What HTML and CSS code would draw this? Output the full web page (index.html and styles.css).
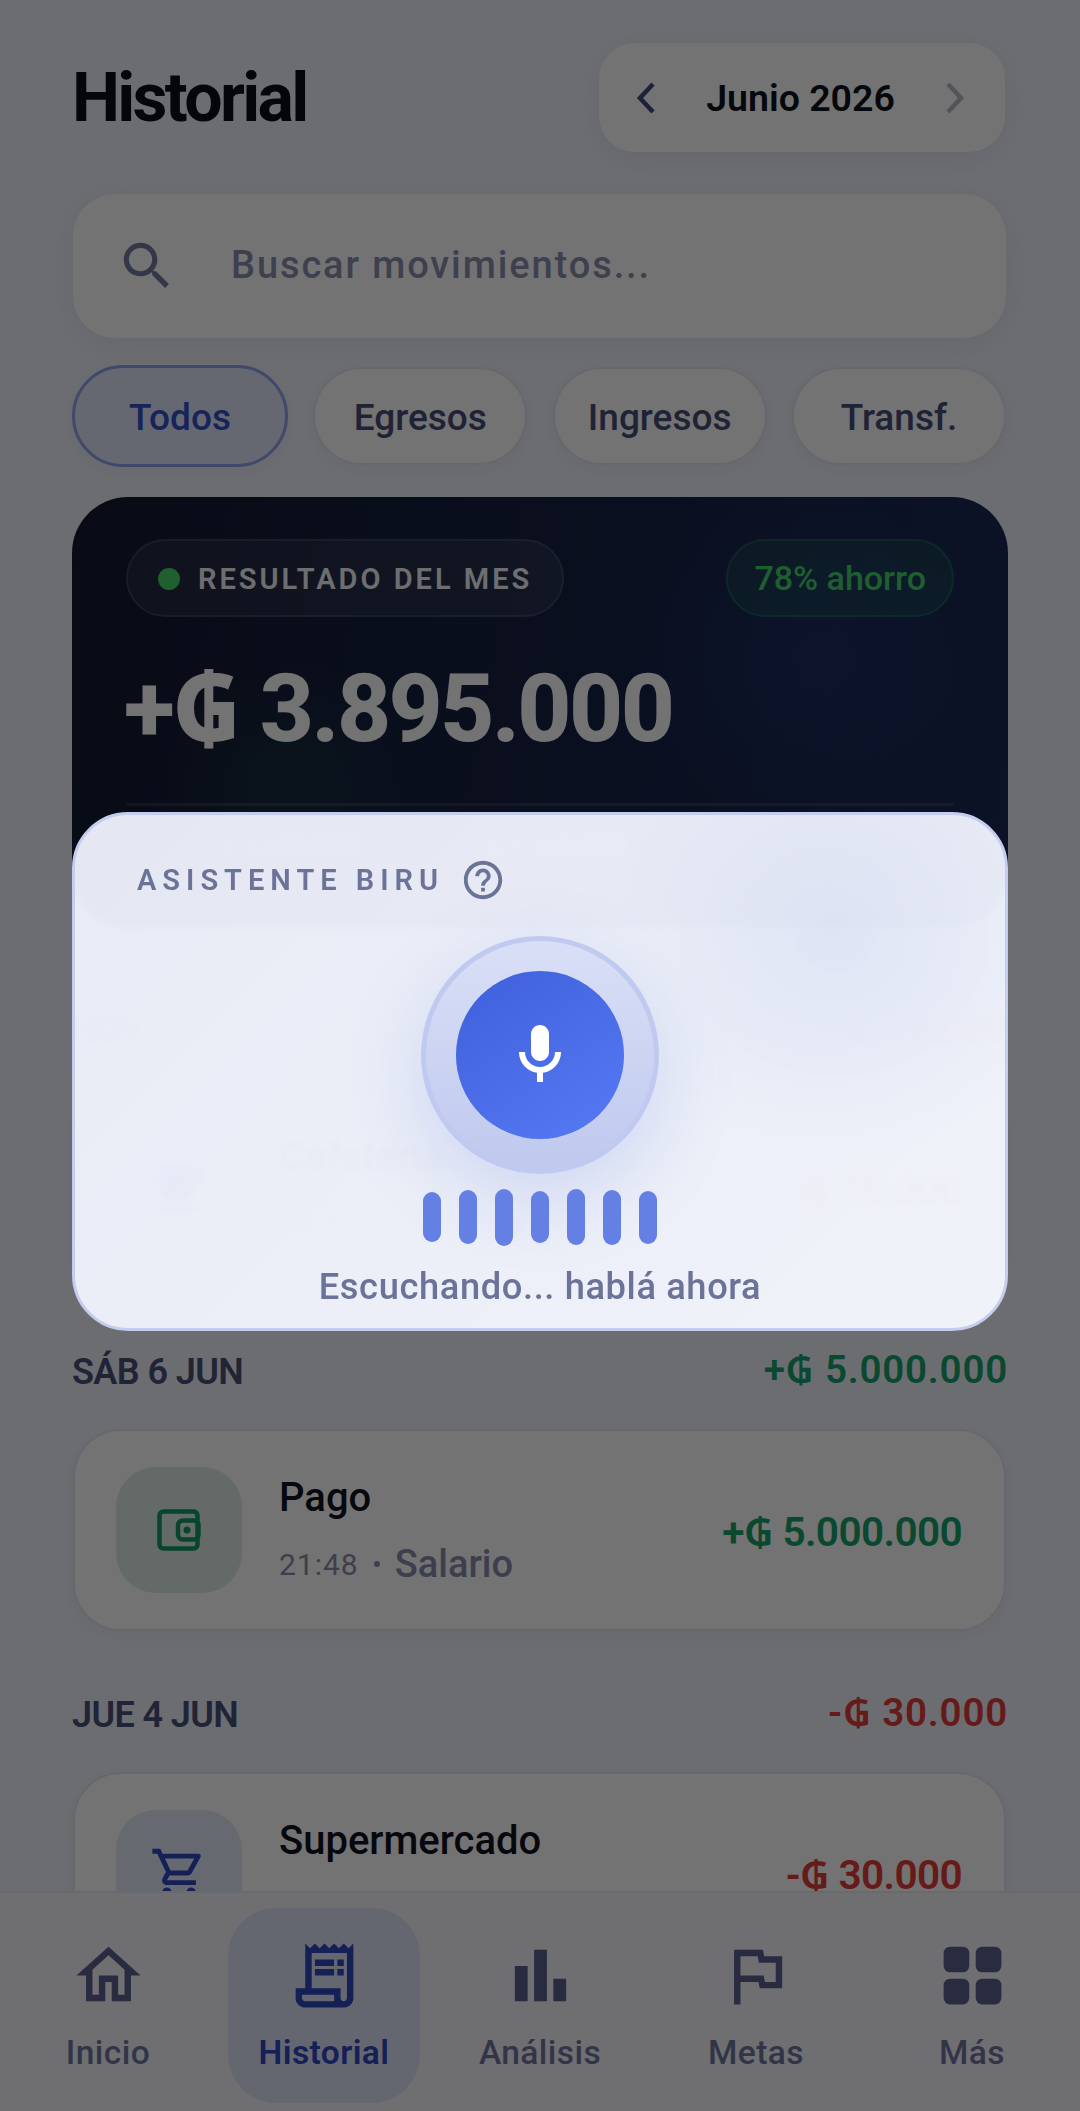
FILE: index.html

```html
<!DOCTYPE html>
<html lang="es">
<head>
    <meta charset="UTF-8">
    <meta name="viewport" content="width=device-width, initial-scale=1">
    <title>Historial</title>
    <link rel="stylesheet" href="styles.css">
</head>
<body>
    <div class="screen">
        <main class="content">
            <header class="top">
                <h1 class="page-title">Historial</h1>
                <div class="month-pill">
                    <svg class="chev" viewBox="0 0 36 36"><path d="M26 4 13 18l13 14"/></svg>
                    <span class="month-name">Junio 2026</span>
                    <svg class="chev chev-off" viewBox="0 0 36 36"><path d="M10 4l13 14-13 14"/></svg>
                </div>
            </header>

            <div class="search">
                <svg class="search-icon" viewBox="0 0 24 24"><path d="M15.5 14h-.79l-.28-.27A6.47 6.47 0 0 0 16 9.5 6.5 6.5 0 1 0 9.5 16c1.61 0 3.09-.59 4.23-1.57l.27.28v.79l5 4.99L20.49 19l-4.99-5zm-6 0C7.01 14 5 11.99 5 9.5S7.01 5 9.5 5 14 7.01 14 9.5 11.99 14 9.5 14z"/></svg>
                <span class="search-text">Buscar movimientos...</span>
            </div>

            <div class="chips">
                <span class="chip chip-on">Todos</span>
                <span class="chip">Egresos</span>
                <span class="chip">Ingresos</span>
                <span class="chip">Transf.</span>
            </div>

            <section class="result">
                <div class="result-top">
                    <span class="result-label"><i class="dot"></i>RESULTADO DEL MES</span>
                    <span class="result-save">78% ahorro</span>
                </div>
                <div class="result-amount">+₲ 3.895.000</div>
                <div class="result-line"></div>
                <div class="result-foot">
                    <span>₲ 5.000.000</span>
                    <span>₲ 1.105.000</span>
                </div>
            </section>

            <div class="day-head day-hoy">
                <span class="day-name">HOY</span>
                <span class="day-sum minus">-₲ 75.000</span>
            </div>
            <div class="row row-hoy">
                <div class="row-icon icon-blue">
                    <svg viewBox="0 0 24 24"><path d="M20 3H4v10c0 2.21 1.79 4 4 4h6c2.21 0 4-1.79 4-4v-3h2c1.11 0 2-.89 2-2V5c0-1.11-.89-2-2-2zm0 5h-2V5h2v3zM4 19h16v2H4z"/></svg>
                </div>
                <div class="row-info">
                    <div class="row-title">Cafetería</div>
                    <div class="row-sub"><span class="row-time">08:30</span><i class="sep"></i><span>Comida</span></div>
                </div>
                <div class="row-amount minus">-₲ 75.000</div>
            </div>

            <div class="day-head day-sab">
                <span class="day-name">SÁB 6 JUN</span>
                <span class="day-sum plus">+₲ 5.000.000</span>
            </div>
            <div class="row">
                <div class="row-icon icon-green">
                    <svg class="wallet" viewBox="0 0 44 42"><rect x="2.5" y="2.5" width="38" height="37" rx="4"/><rect x="21" y="11.5" width="20.5" height="19" rx="5"/><circle class="wallet-dot" cx="30" cy="21" r="3.5"/></svg>
                </div>
                <div class="row-info">
                    <div class="row-title">Pago</div>
                    <div class="row-sub"><span class="row-time">21:48</span><i class="sep"></i><span>Salario</span></div>
                </div>
                <div class="row-amount plus">+₲ 5.000.000</div>
            </div>

            <div class="day-head day-jue">
                <span class="day-name">JUE 4 JUN</span>
                <span class="day-sum minus">-₲ 30.000</span>
            </div>
            <div class="row">
                <div class="row-icon icon-blue">
                    <svg viewBox="0 0 24 24"><path d="M15.55 13c.75 0 1.41-.41 1.75-1.03l3.58-6.49A1 1 0 0 0 20.01 4H5.21l-.94-2H1v2h2l3.6 7.59-1.35 2.44C4.52 15.37 5.48 17 7 17h12v-2H7l1.1-2h7.45zM6.16 6h12.15l-2.76 5H8.53L6.16 6zM7 18a2 2 0 1 0 0 4 2 2 0 0 0 0-4zm10 0a2 2 0 1 0 0 4 2 2 0 0 0 0-4z"/></svg>
                </div>
                <div class="row-info">
                    <div class="row-title">Supermercado</div>
                    <div class="row-sub"><span class="row-time">18:20</span><i class="sep"></i><span>Comida</span></div>
                </div>
                <div class="row-amount minus">-₲ 30.000</div>
            </div>
        </main>

        <nav class="tabs">
            <a class="tab">
                <svg viewBox="0 0 24 24"><path d="M12 5.69l5 4.5V18h-2v-6H9v6H7v-7.81l5-4.5M12 3L2 12h3v8h6v-6h2v6h6v-8h3L12 3z"/></svg>
                <span>Inicio</span>
            </a>
            <a class="tab tab-on">
                <svg viewBox="0 0 24 24"><path d="M19.5 3.5 18 2l-1.5 1.5L15 2l-1.5 1.5L12 2l-1.5 1.5L9 2 7.5 3.5 6 2v14H3v3c0 1.66 1.34 3 3 3h12c1.66 0 3-1.34 3-3V2l-1.5 1.5zM15 20H6c-.55 0-1-.45-1-1v-1h10v2zm4-1c0 .55-.45 1-1 1s-1-.45-1-1v-3H8V5h11v14z"/><path d="M9 7h6v2H9zM16 7h2v2h-2zM9 10h6v2H9zM16 10h2v2h-2z"/></svg>
                <span>Historial</span>
            </a>
            <a class="tab">
                <svg viewBox="0 0 24 24"><path d="M4 9h4v11H4zM16 13h4v7h-4zM10 4h4v16h-4z"/></svg>
                <span>Análisis</span>
            </a>
            <a class="tab">
                <svg viewBox="0 0 24 24"><path d="M12.36 6l.4 2H18v6h-3.36l-.4-2H7V6h5.36M14 4H5v17h2v-7h5.6l.4 2h7V6h-5.6L14 4z"/></svg>
                <span>Metas</span>
            </a>
            <a class="tab">
                <svg viewBox="0 0 24 24"><rect x="3" y="3" width="8" height="8" rx="2"/><rect x="13" y="3" width="8" height="8" rx="2"/><rect x="3" y="13" width="8" height="8" rx="2"/><rect x="13" y="13" width="8" height="8" rx="2"/></svg>
                <span>Más</span>
            </a>
        </nav>

        <div class="scrim"></div>

        <section class="voice">
            <div class="voice-head">
                <span class="voice-title">ASISTENTE BIRU</span>
                <svg class="voice-help" viewBox="0 0 24 24"><path d="M11 18h2v-2h-2v2zm1-16C6.48 2 2 6.48 2 12s4.48 10 10 10 10-4.48 10-10S17.52 2 12 2zm0 18c-4.41 0-8-3.59-8-8s3.59-8 8-8 8 3.59 8 8-3.59 8-8 8zm0-14c-2.21 0-4 1.79-4 4h2c0-1.1.9-2 2-2s2 .9 2 2c0 2-3 1.75-3 5h2c0-2.25 3-2.5 3-5 0-2.21-1.79-4-4-4z"/></svg>
            </div>
            <div class="mic-ring">
                <div class="mic-btn">
                    <svg viewBox="0 0 24 24"><path d="M12 14c1.66 0 3-1.34 3-3V5c0-1.66-1.34-3-3-3S9 3.34 9 5v6c0 1.66 1.34 3 3 3z"/><path d="M17 11c0 2.76-2.24 5-5 5s-5-2.24-5-5H5c0 3.53 2.61 6.43 6 6.92V21h2v-3.08c3.39-.49 6-3.39 6-6.92h-2z"/></svg>
                </div>
            </div>
            <div class="wave">
                <i style="height:50px"></i>
                <i style="height:54px"></i>
                <i style="height:57px"></i>
                <i style="height:52px"></i>
                <i style="height:56px"></i>
                <i style="height:55px"></i>
                <i style="height:53px"></i>
            </div>
            <p class="voice-status">Escuchando... hablá ahora</p>
        </section>
    </div>
</body>
</html>
```

FILE: styles.css

```css
*{
    padding: 0;
    margin: 0;
    box-sizing: border-box;
}
html, body{
    background: #f0f2fb;
}
body{
    font-family: Roboto, "Noto Sans", sans-serif;
    color: #11141f;
}
.screen{
    position: relative;
    width: 1080px;
    height: 2111px;
    overflow: hidden;
}
.content{
    padding: 43px 72px 0;
}

/* header */
.top{
    display: flex;
    justify-content: space-between;
    align-items: center;
    padding-right: 3px;
}
.page-title{
    padding-top: 2px;
    font-size: 68px;
    font-weight: 700;
    letter-spacing: -2.7px;
    line-height: 107px;
    color: #0b0e1a;
}
.month-pill{
    width: 406px;
    height: 109px;
    display: flex;
    align-items: center;
    justify-content: space-between;
    padding: 0 31px 0 28px;
    background: #fff;
    border-radius: 36px;
    box-shadow: 0 6px 24px rgba(30,40,90,.07);
}
.month-name{
    font-size: 37.5px;
    font-weight: 600;
    color: #0f1220;
}
.chev{
    width: 36px;
    height: 36px;
    fill: none;
    stroke: #3f4a86;
    stroke-width: 4.5;
}
.chev-off{
    stroke: #b5b8ca;
}

/* search */
.search{
    margin: 42px 2px 0 1px;
    height: 144px;
    display: flex;
    align-items: center;
    gap: 53px;
    padding-left: 43px;
    background: #fff;
    border-radius: 42px;
    box-shadow: 0 6px 24px rgba(30,40,90,.07);
}
.search-icon{
    width: 62px;
    height: 62px;
    fill: #737a9e;
}
.search-text{
    padding-bottom: 2px;
    font-size: 38px;
    font-weight: 500;
    letter-spacing: 1.9px;
    color: #8a8fb0;
}

/* chips */
.chips{
    margin-top: 27px;
    display: flex;
    align-items: center;
    justify-content: space-between;
    padding-right: 2px;
}
.chip{
    width: 214px;
    height: 98px;
    display: flex;
    align-items: center;
    justify-content: center;
    padding-top: 3px;
    font-size: 37px;
    font-weight: 500;
    color: #474e78;
    background: #fff;
    border: 2px solid #e4e6f3;
    border-radius: 49px;
    box-shadow: 0 4px 16px rgba(30,40,90,.05);
}
.chip-on{
    width: 216px;
    height: 102px;
    border-radius: 51px;
    color: #3450c8;
    background: #dfe5fb;
    border: 3px solid #8ea3ea;
}

/* monthly result */
.result{
    margin-top: 30px;
    height: 431px;
    padding: 42px 54px 0;
    border-radius: 56px;
    background: radial-gradient(circle at 220px 290px, rgba(40,150,90,.12), transparent 130px), radial-gradient(circle at 740px 160px, rgba(50,80,190,.16), transparent 170px), linear-gradient(100deg, #131a30 0%, #1c2a58 100%);
    color: #fff;
}
.result-top{
    display: flex;
    justify-content: space-between;
    align-items: center;
}
.result-label{
    height: 78px;
    display: flex;
    align-items: center;
    gap: 18px;
    padding: 2px 30px 0;
    font-size: 29px;
    font-weight: 600;
    letter-spacing: 3px;
    color: #f2f3f7;
    background: rgba(255,255,255,.07);
    border: 2px solid rgba(255,255,255,.1);
    border-radius: 39px;
}
.dot{
    width: 22px;
    height: 22px;
    border-radius: 50%;
    background: #43d668;
}
.result-save{
    height: 78px;
    display: flex;
    align-items: center;
    padding: 0 26px;
    font-size: 34px;
    font-weight: 500;
    color: #46d06a;
    background: rgba(40,200,110,.12);
    border: 2px solid rgba(40,200,110,.22);
    border-radius: 39px;
}
.result-amount{
    margin: 37px 0 0 -2px;
    font-size: 94px;
    font-weight: 800;
    letter-spacing: -2.5px;
    line-height: 110px;
}
.result-line{
    margin-top: 39px;
    height: 3px;
    background: rgba(255,255,255,.1);
}
.result-foot{
    margin-top: 26px;
    padding-left: 90px;
    display: flex;
    gap: 126px;
    font-size: 26px;
    line-height: 28px;
    color: #c9cede;
}

/* day groups */
.day-head{
    margin-top: 61px;
    display: flex;
    justify-content: space-between;
    align-items: center;
    height: 44px;
}
.day-hoy{
    margin-top: 80px;
}
.day-sab{
    margin-top: 59px;
}
.day-name{
    margin-top: 2px;
    font-size: 36px;
    font-weight: 600;
    letter-spacing: -.6px;
    color: #4a5178;
}
.day-sum{
    margin-top: -6px;
    font-size: 38.5px;
    font-weight: 600;
    letter-spacing: .8px;
}
.plus{
    color: #17a06a;
}
.minus{
    color: #e23a3a;
}
.row{
    margin: 36px 2px 0 1px;
    height: 202px;
    display: flex;
    align-items: center;
    padding: 0 42px 0 41px;
    background: #fff;
    border: 2px solid #e4e6f3;
    border-radius: 48px;
    box-shadow: 0 4px 16px rgba(30,40,90,.05);
}
.row-hoy{
    margin-top: 36px;
}
.row-icon{
    flex: none;
    width: 126px;
    height: 126px;
    display: flex;
    align-items: center;
    justify-content: center;
    border-radius: 40px;
}
.row-icon svg{
    width: 58px;
    height: 58px;
}
.icon-green{
    background: #dcebe6;
    fill: #0f9e63;
}
.icon-blue{
    background: #e5e8fa;
    fill: #2f47c2;
}
.row-icon .wallet{
    width: 44px;
    height: 42px;
    fill: none;
    stroke: #119a63;
    stroke-width: 4.5;
}
.wallet-dot{
    fill: #119a63;
    stroke: none;
}
.row-info{
    flex: 1;
    padding-left: 37px;
}
.row-title{
    font-size: 40px;
    font-weight: 500;
    color: #10131f;
}
.row-sub{
    margin-top: 21px;
    display: flex;
    align-items: center;
    font-size: 38px;
    font-weight: 500;
    color: #878cae;
}
.row-time{
    font-size: 30px;
    font-weight: 400;
    letter-spacing: 1px;
}
.sep{
    width: 6px;
    height: 6px;
    margin: 0 15px;
    border-radius: 50%;
    background: #878cae;
}
.row-amount{
    font-size: 40.5px;
    font-weight: 600;
    letter-spacing: -.6px;
}

/* bottom nav */
.tabs{
    position: absolute;
    left: 0;
    right: 0;
    bottom: 0;
    height: 220px;
    display: grid;
    grid-template-columns: repeat(5, 1fr);
    justify-items: center;
    padding-top: 15px;
    background: #f5f6fb;
    border-top: 2px solid #e8eaf4;
}
.tab{
    width: 192px;
    height: 195px;
    display: flex;
    flex-direction: column;
    align-items: center;
    padding-top: 29px;
    font-size: 33.6px;
    font-weight: 500;
    letter-spacing: .4px;
    color: #6f77a0;
    fill: #5c6390;
    border-radius: 48px;
}
.tab svg{
    width: 77px;
    height: 77px;
}
.tab span{
    margin-top: 19px;
}
.tab-on{
    background: #dfe5f8;
    color: #2f47c2;
    fill: #2f47c2;
    font-weight: 600;
}

/* overlay */
.scrim{
    position: absolute;
    inset: 0;
    background: rgba(0,0,0,.55);
}
.voice{
    position: absolute;
    left: 72px;
    top: 812px;
    width: 936px;
    height: 519px;
    padding-top: 42px;
    display: flex;
    flex-direction: column;
    align-items: center;
    background: radial-gradient(ellipse 240px 220px at 760px 120px, rgba(205,213,240,.42), transparent), linear-gradient(135deg, rgba(238,241,252,.96), rgba(245,248,255,.96));
    -webkit-backdrop-filter: blur(3px);
    backdrop-filter: blur(3px);
    border: 3px solid #c5cdee;
    border-radius: 56px;
}
.voice-head{
    align-self: flex-start;
    display: flex;
    align-items: center;
    gap: 16px;
    padding-left: 62px;
}
.voice-title{
    font-size: 29px;
    font-weight: 600;
    letter-spacing: 6px;
    color: #6b7398;
}
.voice-help{
    width: 46px;
    height: 46px;
    fill: #6b7398;
}
.mic-ring{
    margin-top: 33px;
    width: 238px;
    height: 238px;
    display: flex;
    align-items: center;
    justify-content: center;
    border-radius: 50%;
    background: linear-gradient(180deg, #d9dff6, #bfc9ee);
    border: 5px solid #c0caf0;
    box-shadow: 0 24px 80px rgba(80,110,220,.2);
}
.mic-btn{
    width: 168px;
    height: 168px;
    display: flex;
    align-items: center;
    justify-content: center;
    border-radius: 50%;
    background: linear-gradient(145deg, #3f60da, #5679f5);
}
.mic-btn svg{
    width: 72px;
    height: 72px;
    fill: #fff;
}
.wave{
    margin-top: 14px;
    height: 58px;
    display: flex;
    align-items: center;
    gap: 18px;
}
.wave i{
    width: 18px;
    border-radius: 9px;
    background: #6480e4;
}
.voice-status{
    margin-top: 19px;
    font-size: 36.3px;
    font-weight: 500;
    letter-spacing: .6px;
    color: #6b7398;
}
```
